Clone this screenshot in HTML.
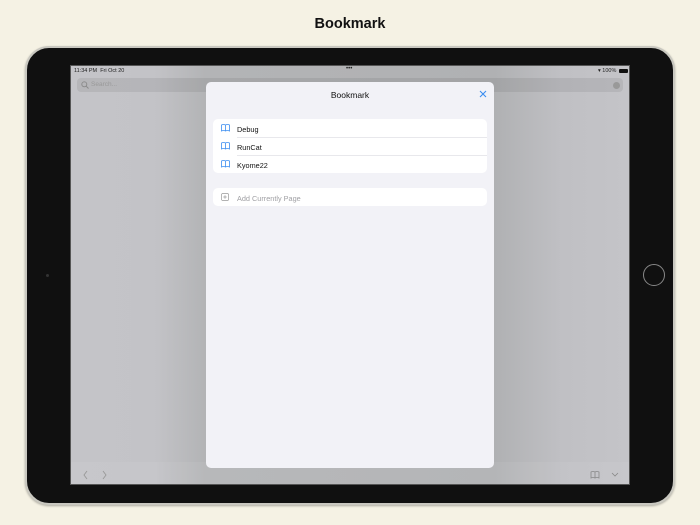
<!DOCTYPE html>
<html><head><meta charset="utf-8"><style>
*{margin:0;padding:0;box-sizing:border-box}
body{width:700px;height:525px;background:#f5f2e4;position:relative;overflow:hidden;font-family:"Liberation Sans",sans-serif}
.h{position:absolute;top:16px;left:0;width:700px;text-align:center;font-weight:bold;font-size:14.5px;color:#111}
.dev{position:absolute;left:25px;top:46px;width:650px;height:459px;background:#101010;border-radius:24px;border:2px solid #c9c8c0;box-shadow:0 1px 2px rgba(0,0,0,.3)}
.scr{position:absolute;left:70px;top:65px;width:560px;height:420px;background:linear-gradient(90deg,#c4c4c8 0%,#c3c3c7 15%,#b3b4b6 24%,#b0b1b3 76%,#c0c0c4 88%,#c4c4c8 100%);overflow:hidden;border:1px solid #555}
.sb{position:absolute;top:2px;font-size:5.5px;color:#222}
.search{position:absolute;left:6px;top:12px;width:546px;height:14px;background:rgba(0,0,0,.07);border-radius:4px;font-size:6.5px;color:#999;padding:3px 0 0 14px}
.tb{position:absolute;left:0;bottom:0;width:560px;height:22px;background:rgba(255,255,255,.06)}
.modal{position:absolute;left:206px;top:82px;width:288px;height:386px;background:#f2f2f7;border-radius:5px}
.mt{position:absolute;top:8px;width:100%;text-align:center;font-size:8.5px;color:#111}
.card{position:absolute;left:7px;width:274px;background:#fff;border-radius:5px}
.row{height:18px;position:relative;font-size:7.3px;color:#111;padding:5.5px 0 0 24px}
.sep{position:absolute;left:24px;right:0;top:0;height:1px;background:#e8e8ec}
.ic{position:absolute;left:8px;top:5px}
</style></head><body>
<div class="h">Bookmark</div>
<div class="dev"></div>
<div style="position:absolute;left:46px;top:274px;width:3px;height:3px;border-radius:50%;background:#333"></div>
<div style="position:absolute;left:643px;top:264px;width:22px;height:22px;border-radius:50%;border:1.2px solid #888"></div>
<div class="scr">
 <div class="sb" style="left:3px">11:34 PM&nbsp;&nbsp;Fri Oct 20</div>
 <div class="sb" style="left:275px;font-size:6px;top:0">•••</div>
 <div class="sb" style="left:527px">&#9662; 100%</div>
 <div style="position:absolute;left:548px;top:3px;width:9px;height:4px;background:#111;border-radius:1px"></div>
 <div class="search"><svg style="position:absolute;left:4px;top:3px" width="8" height="8" viewBox="0 0 8 8"><circle cx="3.3" cy="3.3" r="2.5" fill="none" stroke="#888" stroke-width=".9"/><path d="M5.2 5.2L7.5 7.5" stroke="#888" stroke-width=".9"/></svg>Search...</div>
 <div style="position:absolute;left:542px;top:16px;width:7px;height:7px;border-radius:50%;background:#999"></div>
 <div class="tb"></div>
 <svg style="position:absolute;left:12px;top:404px" width="30" height="10" viewBox="0 0 30 10"><path d="M4 1L1 5L4 9M20 1L23 5L20 9" fill="none" stroke="#999" stroke-width=".9"/></svg>
 <svg style="position:absolute;left:519px;top:404px" width="30" height="10" viewBox="0 0 30 10"><path d="M1 2Q3 1 5 2Q7 1 9 2V8Q7 7 5 8Q3 7 1 8ZM5 2V8" fill="none" stroke="#888" stroke-width=".8"/><path d="M22 3L25 6L28 3" fill="none" stroke="#888" stroke-width=".8"/></svg>
</div>
<div class="modal">
 <div class="mt">Bookmark</div>
 <svg style="position:absolute;left:273px;top:8px" width="8" height="8" viewBox="0 0 8 8"><path d="M1 1L7 7M7 1L1 7" stroke="#3b8df0" stroke-width="1.1"/></svg>
 <div class="card" style="top:37px">
  <div class="row"><svg class="ic" width="9" height="8" viewBox="0 0 9 8"><path d="M.5 1Q2.5 0 4.5 1Q6.5 0 8.5 1V7Q6.5 6 4.5 7Q2.5 6 .5 7ZM4.5 1V7" fill="none" stroke="#3b8df0" stroke-width=".8"/></svg>Debug</div>
  <div class="row"><div class="sep"></div><svg class="ic" width="9" height="8" viewBox="0 0 9 8"><path d="M.5 1Q2.5 0 4.5 1Q6.5 0 8.5 1V7Q6.5 6 4.5 7Q2.5 6 .5 7ZM4.5 1V7" fill="none" stroke="#3b8df0" stroke-width=".8"/></svg>RunCat</div>
  <div class="row"><div class="sep"></div><svg class="ic" width="9" height="8" viewBox="0 0 9 8"><path d="M.5 1Q2.5 0 4.5 1Q6.5 0 8.5 1V7Q6.5 6 4.5 7Q2.5 6 .5 7ZM4.5 1V7" fill="none" stroke="#3b8df0" stroke-width=".8"/></svg>Kyome22</div>
 </div>
 <div class="card" style="top:106px">
  <div class="row" style="color:#a0a0a4"><svg class="ic" width="8" height="8" viewBox="0 0 8 8"><rect x=".5" y=".5" width="7" height="7" rx="1.3" fill="none" stroke="#999" stroke-width=".7"/><path d="M4 2.3V5.7M2.3 4H5.7" stroke="#999" stroke-width=".7"/></svg>Add Currently Page</div>
 </div>
</div>
</body></html>
